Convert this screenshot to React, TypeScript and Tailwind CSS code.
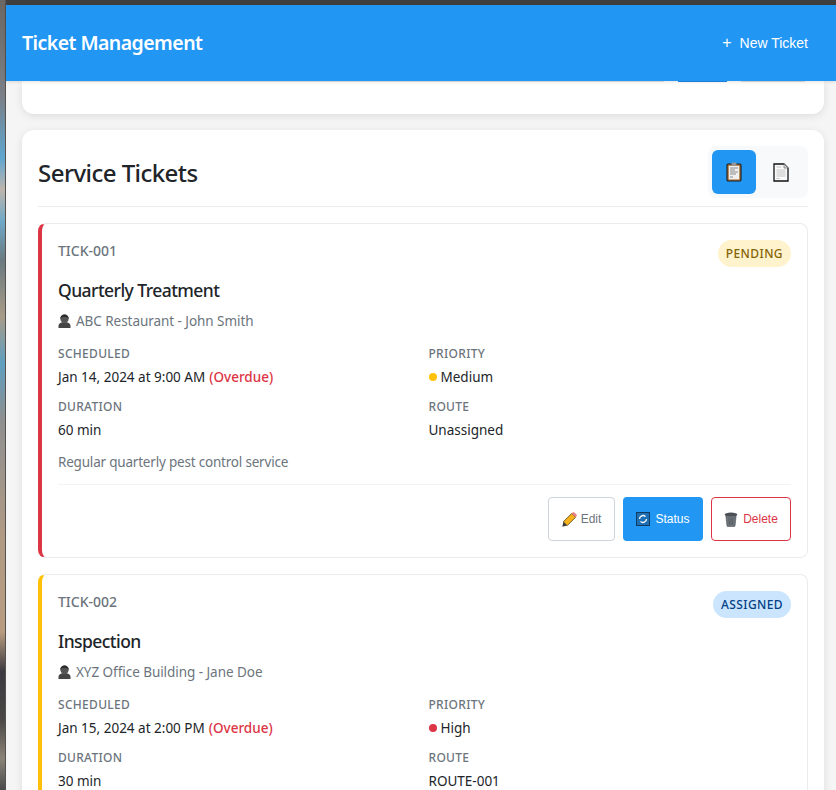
import type { ReactNode } from 'react';

function ClipboardIcon() {
  return (
    <svg width="16" height="20" viewBox="0 0 16 20" className="block">
      <rect x="1" y="2" width="14" height="17" rx="1.2" fill="#a9743c" stroke="#1c1c1c" strokeWidth="1.1" />
      <rect x="2.800" y="3.800" width="10.400" height="13.600" fill="#f1f1f1" />
      <rect x="5.500" y="0.500" width="5" height="3" rx="1" fill="#8f979e" />
      <path d="M4 6h8M4 8h5M4 10h8M4 12h6M4 15h3" stroke="#8a8a8a" strokeWidth="1" />
    </svg>
  );
}

function DocumentIcon() {
  return (
    <svg width="16" height="19" viewBox="0 0 16 19" className="block">
      <path d="M1 1h10l4 4v13H1z" fill="#fafafa" stroke="#111" strokeWidth="1.300" />
      <path d="M11 1v4h4" fill="#ddd" stroke="#777" strokeWidth="0.800" />
      <path d="M3.500 4h5M3.500 7h9M3.500 9h9M3.500 11h9M3.500 13h9M3.500 15.500h3" stroke="#c4c4c4" strokeWidth="1.100" />
    </svg>
  );
}

function BustIcon() {
  return (
    <svg width="13" height="14" viewBox="0 0 13 14" className="block">
      <path d="M0.500 14v-2.200c0-2 1.800-3.300 3.500-3.600h5c1.700.3 3.500 1.600 3.500 3.600V14z" fill="#454545" />
      <circle cx="6.500" cy="4.700" r="4.200" fill="#555" />
      <path d="M2.300 4.700a4.200 4.200 0 0 1 8.400 0c-1-1.300-2.300-1.700-4.200-1.700s-3.200.4-4.200 1.700z" fill="#2c2c2c" />
    </svg>
  );
}

function PencilIcon() {
  return (
    <svg width="15" height="15" viewBox="0 0 14 14" className="block">
      <path d="M0.300 13.700l1-4.600 3.600 3.600z" fill="#3a3a3a" />
      <path d="M1.300 9.100l7.800-7.800 3.600 3.600-7.800 7.800z" fill="#f5b21a" stroke="#4a3708" strokeWidth="0.700" />
      <path d="M9.100 1.300l.9-.9c.6-.3 1.200-.3 1.800.2l1.600 1.600c.5.600.5 1.200.2 1.800l-.9.900z" fill="#e8808a" />
    </svg>
  );
}

function RefreshIcon() {
  return (
    <svg width="14" height="14" viewBox="0 0 14 14" className="block">
      <rect x="0.500" y="0.500" width="13" height="13" fill="#1f6fb5" stroke="#123a5e" />
      <path d="M3.500 7a3.500 3.500 0 0 1 6-2.400M10.500 7a3.500 3.500 0 0 1-6 2.400" fill="none" stroke="#fff" strokeWidth="1.300" />
    </svg>
  );
}

function TrashIcon() {
  return (
    <svg width="14" height="15" viewBox="0 0 14 15" className="block">
      <path d="M1.800 3h10.400l-1.200 10.800c-.1.500-.4.800-.9.800H3.900c-.5 0-.8-.3-.9-.8z" fill="#6f777c" stroke="#3f4549" strokeWidth="0.600" />
      <ellipse cx="7" cy="2.400" rx="6.300" ry="1.800" fill="#4a5055" />
      <path d="M5 5.500l.4 7.500M7 5.500V13M9 5.500l-.4 7.500" stroke="#4a5055" strokeWidth="0.600" />
    </svg>
  );
}

interface TicketProps {
  id: string;
  title: string;
  customer: string;
  scheduled: string;
  priority: string;
  priorityDot: string;
  duration: string;
  route: string;
  notes?: string;
  borderClass: string;
  badge: string;
  badgeClass: string;
}

function Field({ label, children }: { label: string; children: ReactNode }) {
  return (
    <div className="flex h-[53px] flex-col">
      <div className="h-[24px] pt-px text-[12px] leading-[24px] font-medium tracking-[0.3px] text-[#6c757d] uppercase">{label}</div>
      <div className="flex h-[24px] items-center text-[13.5px] leading-[24px] text-[#212529]">{children}</div>
    </div>
  );
}

function TicketCard(t: TicketProps) {
  return (
    <div className={`rounded-lg border border-[#e9ecef] border-l-4 bg-white px-4 pt-4 pb-4 ${t.borderClass}`}>
      <div className="flex h-[27px] items-start justify-between">
        <span className="text-[14px] leading-[22px] font-medium text-[#6c757d]">{t.id}</span>
        <span className={`flex h-[27px] items-center rounded-full px-2 text-[12px] font-medium tracking-[0.4px] ${t.badgeClass}`}>{t.badge}</span>
      </div>
      <h3 className="mt-[9px] h-[28px] text-[17.5px] leading-[28px] font-medium tracking-[-0.55px] text-[#212529]">{t.title}</h3>
      <div className="mt-[5px] flex h-[24px] items-center gap-[5px] text-[13.5px] tracking-[-0.05px] text-[#6c757d]">
        <BustIcon />
        {t.customer}
      </div>
      <div className="mt-[8px] grid grid-cols-2 gap-x-2">
        <Field label="Scheduled">
          {t.scheduled}
          <span className="ml-[4px] font-medium text-[#dc3545]">(Overdue)</span>
        </Field>
        <Field label="Priority">
          <span className={`mr-[4px] h-2 w-2 rounded-full ${t.priorityDot}`} />
          {t.priority}
        </Field>
        <Field label="Duration">{t.duration}</Field>
        <Field label="Route">{t.route}</Field>
      </div>
      {t.notes && (
        <>
          <p className="mt-[3px] h-[24px] text-[13.5px] leading-[24px] tracking-[-0.2px] text-[#6c757d]">{t.notes}</p>
          <div className="mt-[10px] flex justify-end gap-2 border-t border-[#f3f3f3] pt-3 font-['Liberation_Sans',Arial,sans-serif] text-[12px]">
            <button className="flex h-[44px] w-[67px] items-center justify-center gap-[4px] rounded border border-[#ced4da] bg-white text-[#6c757d]">
              <PencilIcon />
              Edit
            </button>
            <button className="flex h-[44px] w-[80px] items-center justify-center gap-[5px] rounded bg-[#2196f3] text-white">
              <RefreshIcon />
              Status
            </button>
            <button className="flex h-[44px] w-[80px] items-center justify-center gap-[5px] rounded border border-[#dc3545] bg-white text-[#dc3545]">
              <TrashIcon />
              Delete
            </button>
          </div>
        </>
      )}
    </div>
  );
}

export default function App() {
  return (
    <div className="flex h-[790px] overflow-hidden font-['Noto_Sans',sans-serif]">
      <div className="w-[6px] shrink-0 border-r border-[#55524f] bg-[linear-gradient(180deg,#6b6763_0%,#7b7f86_12%,#5fa6d0_20%,#bdb5ad_24%,#6fa8c8_28%,#6a7a80_33%,#a89a88_40%,#5f9fc0_46%,#8e8f90_53%,#b09a84_68%,#b89c80_80%,#3c3a40_85%,#4a4746_91%,#8a8378_96%,#4a4a4a_100%)]" />
      <div className="flex min-w-0 flex-1 flex-col bg-[#f5f5f5]">
        <div className="h-[5px] shrink-0 bg-[#3f3f3f]" />
        <header className="z-10 flex h-[76px] shrink-0 items-center justify-between bg-[#2196f3] pr-[28px] pl-4 shadow-[0_1px_3px_rgba(0,0,0,0.12)]">
          <h1 className="text-[19.5px] font-semibold tracking-[-0.55px] text-white">Ticket Management</h1>
          <button className="flex items-center gap-2 font-['Liberation_Sans',Arial,sans-serif] text-[14px] text-white">
            <span className="text-[16px] leading-none">+</span>
            New Ticket
          </button>
        </header>
        <div className="flex flex-col gap-4 pr-3 pl-4">
          <div className="h-[33px] rounded-b-xl bg-white shadow-[0_2px_8px_rgba(0,0,0,0.1)]">
            <div className="flex h-px gap-[14px] pr-[19px] pl-[18px]">
              <div className="flex-1 bg-[#e4e4e4]" />
              <div className="w-[49px] bg-[#1e88e5]" />
              <div className="w-[64px] bg-[#dcdcdc]" />
            </div>
          </div>
          <section className="rounded-xl bg-white px-4 pt-4 shadow-[0_2px_8px_rgba(0,0,0,0.1)]">
            <div className="flex h-[61px] items-start justify-between border-b border-[#e9ecef]">
              <h2 className="mt-[7px] text-[24px] leading-[40px] font-medium tracking-[-0.55px] text-[#212529]">Service Tickets</h2>
              <div className="flex h-[52px] w-[100px] gap-[2px] rounded-lg bg-[#f8f9fa] p-1">
                <button className="flex h-[44px] w-[44px] items-center justify-center rounded-md bg-[#2196f3]">
                  <ClipboardIcon />
                </button>
                <button className="flex h-[44px] w-[46px] items-center justify-center rounded-md">
                  <DocumentIcon />
                </button>
              </div>
            </div>
            <div className="mt-4 flex flex-col gap-4">
              <TicketCard
                id="TICK-001"
                title="Quarterly Treatment"
                customer="ABC Restaurant - John Smith"
                scheduled="Jan 14, 2024 at 9:00 AM"
                priority="Medium"
                priorityDot="bg-[#ffc107]"
                duration="60 min"
                route="Unassigned"
                notes="Regular quarterly pest control service"
                borderClass="border-l-[#dc3545]"
                badge="PENDING"
                badgeClass="bg-[#fff3cd] text-[#856404]"
              />
              <TicketCard
                id="TICK-002"
                title="Inspection"
                customer="XYZ Office Building - Jane Doe"
                scheduled="Jan 15, 2024 at 2:00 PM"
                priority="High"
                priorityDot="bg-[#dc3545]"
                duration="30 min"
                route="ROUTE-001"
                borderClass="border-l-[#ffc107]"
                badge="ASSIGNED"
                badgeClass="bg-[#cce5ff] text-[#004085]"
              />
            </div>
          </section>
        </div>
      </div>
    </div>
  );
}
